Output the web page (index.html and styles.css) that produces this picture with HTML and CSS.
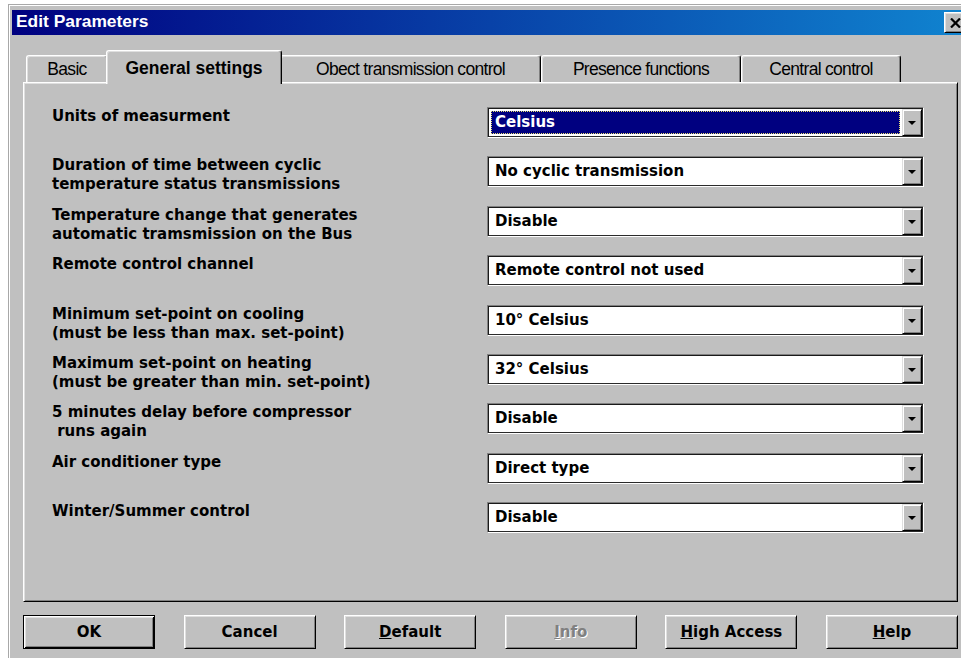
FILE: index.html
```html
<!DOCTYPE html>
<html lang="en">
<head>
<meta charset="utf-8">
<title>Edit Parameters</title>
<link rel="stylesheet" href="styles.css">
</head>
<body>
<div class="window">
  <div class="titlebar">
    <span class="title">Edit Parameters</span>
    <button type="button" class="close" aria-label="Close">
      <svg width="11" height="10" viewBox="0 0 11 10"><path d="M1 0.5 L10 9.5 M10 0.5 L1 9.5" stroke="#000" stroke-width="2.2" fill="none"/></svg>
    </button>
  </div>

  <div class="tabs">
    <div class="tab tab-basic">Basic</div>
    <div class="tab tab-general active">General settings</div>
    <div class="tab tab-object">Obect transmission control</div>
    <div class="tab tab-presence">Presence functions</div>
    <div class="tab tab-central">Central control</div>
  </div>

  <div class="panel">
    <div class="params">
      <div class="label">Units of measurment</div>
      <div class="field"><div class="value selected">Celsius</div><span class="drop"></span></div>

      <div class="label">Duration of time between cyclic<br>temperature status transmissions</div>
      <div class="field"><div class="value">No cyclic transmission</div><span class="drop"></span></div>

      <div class="label">Temperature change that generates<br>automatic tramsmission on the Bus</div>
      <div class="field"><div class="value">Disable</div><span class="drop"></span></div>

      <div class="label">Remote control channel</div>
      <div class="field"><div class="value">Remote control not used</div><span class="drop"></span></div>

      <div class="label">Minimum set-point on cooling<br>(must be less than max. set-point)</div>
      <div class="field"><div class="value">10° Celsius</div><span class="drop"></span></div>

      <div class="label">Maximum set-point on heating<br>(must be greater than min. set-point)</div>
      <div class="field"><div class="value">32° Celsius</div><span class="drop"></span></div>

      <div class="label">5 minutes delay before compressor<br>&nbsp;runs again</div>
      <div class="field"><div class="value">Disable</div><span class="drop"></span></div>

      <div class="label">Air conditioner type</div>
      <div class="field"><div class="value">Direct type</div><span class="drop"></span></div>

      <div class="label">Winter/Summer control</div>
      <div class="field"><div class="value">Disable</div><span class="drop"></span></div>
    </div>
  </div>

  <div class="actions">
    <button type="button" class="btn default">OK</button>
    <button type="button" class="btn">Cancel</button>
    <button type="button" class="btn"><u>D</u>efault</button>
    <button type="button" class="btn disabled"><u>I</u>nfo</button>
    <button type="button" class="btn"><u>H</u>igh Access</button>
    <button type="button" class="btn"><u>H</u>elp</button>
  </div>
</div>
</body>
</html>
```

FILE: styles.css
```css
* {
  box-sizing: border-box;
}

html,
body {
  margin: 0;
  height: 100%;
  overflow: hidden;
}

body {
  background: #fff;
  font-family: "DejaVu Sans", sans-serif;
}

/* dialog frame */
.window {
  margin: 4px 0 0 8px;
  width: 964px;
  height: 654px;
  background: #c0c0c0;
  border-top: 1px solid #a8a8a8;
  border-left: 1px solid #a8a8a8;
  box-shadow: inset 1px 1px 0 #fff;
  padding: 5px 3px 0 3px;
  display: flex;
  flex-direction: column;
}

/* caption bar */
.titlebar {
  flex: none;
  height: 25px;
  display: flex;
  align-items: center;
  justify-content: space-between;
  padding: 0 3px 2px 4px;
  background: linear-gradient(to right, #000080, #1084d0);
}

.title {
  font: bold 17.4px "Liberation Sans", Arial, sans-serif;
  color: #fff;
}

.close {
  width: 22px;
  height: 21px;
  padding: 0;
  margin-top: 2px;
  display: flex;
  align-items: center;
  justify-content: center;
  background: #c0c0c0;
  border: 1px solid;
  border-color: #fff #000 #000 #fff;
  box-shadow: inset 1px 1px 0 #dfdfdf, inset -1px -1px 0 #808080;
}

/* tab strip */
.tabs {
  flex: none;
  height: 32px;
  margin: 15px 0 0 14px;
  display: flex;
  align-items: flex-end;
}

.tab {
  height: 27px;
  padding-top: 3px;
  line-height: 24px;
  text-align: center;
  white-space: nowrap;
  font: 17.5px "Liberation Sans", Arial, sans-serif;
  letter-spacing: -0.7px;
  color: #000;
  background: #c0c0c0;
  border-top: 1px solid #fff;
  border-left: 1px solid #fff;
  border-right: 1px solid #000;
  border-radius: 3px 3px 0 0;
  box-shadow: inset -1px 0 0 #808080, inset 1px 1px 0 #dfdfdf;
}

.tab.active {
  height: 34px;
  margin: 0 -2px -2px;
  padding-top: 7px;
  position: relative;
  z-index: 1;
  font-weight: bold;
  letter-spacing: 0;
}

.tab-basic { width: 82px; }
.tab-general { width: 176px; }
.tab-object { width: 261px; }
.tab-presence { width: 200px; }
.tab-central { width: 160px; }

/* tab page */
.panel {
  flex: none;
  margin-left: 11px;
  width: 935px;
  height: 520px;
  border: 1px solid;
  border-color: #fff #000 #000 #fff;
  box-shadow: inset 1px 1px 0 #dfdfdf, inset -1px -1px 0 #808080;
  padding: 24px 33px 0 28px;
}

.params {
  display: grid;
  grid-template-columns: 1fr 437px;
  grid-auto-rows: 49.375px;
  align-items: start;
}

.label {
  font: bold 15px "DejaVu Sans", sans-serif;
  line-height: 19px;
  color: #000;
  white-space: nowrap;
}

/* drop-down list */
.field {
  height: 31px;
  display: flex;
  padding: 1px;
  background: #fff;
  border: 1px solid;
  border-color: #808080 #fff #fff #808080;
  box-shadow: inset 1px 1px 0 #1a1a1a, inset -1px -1px 0 #2a2a2a;
}

.value {
  flex: 1;
  margin: 2px;
  padding-left: 3px;
  border: 1px dotted transparent;
  font: bold 15px "DejaVu Sans", sans-serif;
  line-height: 21px;
  color: #000;
  white-space: nowrap;
}

.value.selected {
  background: #000080;
  color: #fff;
  border-color: #e8e070;
}

.drop {
  flex: none;
  width: 20px;
  display: flex;
  align-items: center;
  justify-content: center;
  background: #c0c0c0;
  border: 1px solid;
  border-color: #dfdfdf #000 #000 #dfdfdf;
  box-shadow: inset 1px 1px 0 #fff, inset -1px -1px 0 #808080;
}

.drop::after {
  content: "";
  width: 0;
  height: 0;
  margin-top: 1px;
  border-left: 4px solid transparent;
  border-right: 4px solid transparent;
  border-top: 4px solid #000;
}

/* command buttons */
.actions {
  flex: none;
  width: 935px;
  margin: 13px 0 0 11px;
  display: flex;
  justify-content: space-between;
}

.btn {
  width: 132px;
  height: 34px;
  padding: 0;
  font: bold 15px "DejaVu Sans", sans-serif;
  color: #000;
  background: #c0c0c0;
  border: 1px solid;
  border-color: #fff #000 #000 #fff;
  box-shadow: inset 1px 1px 0 #dfdfdf, inset -1px -1px 0 #808080;
}

.btn.default {
  border-color: #000;
  box-shadow: inset 1px 1px 0 #fff, inset -1px -1px 0 #000,
              inset 2px 2px 0 #dfdfdf, inset -2px -2px 0 #808080;
}

.btn.disabled {
  color: #808080;
  text-shadow: 1px 1px 0 #fff;
}
```
